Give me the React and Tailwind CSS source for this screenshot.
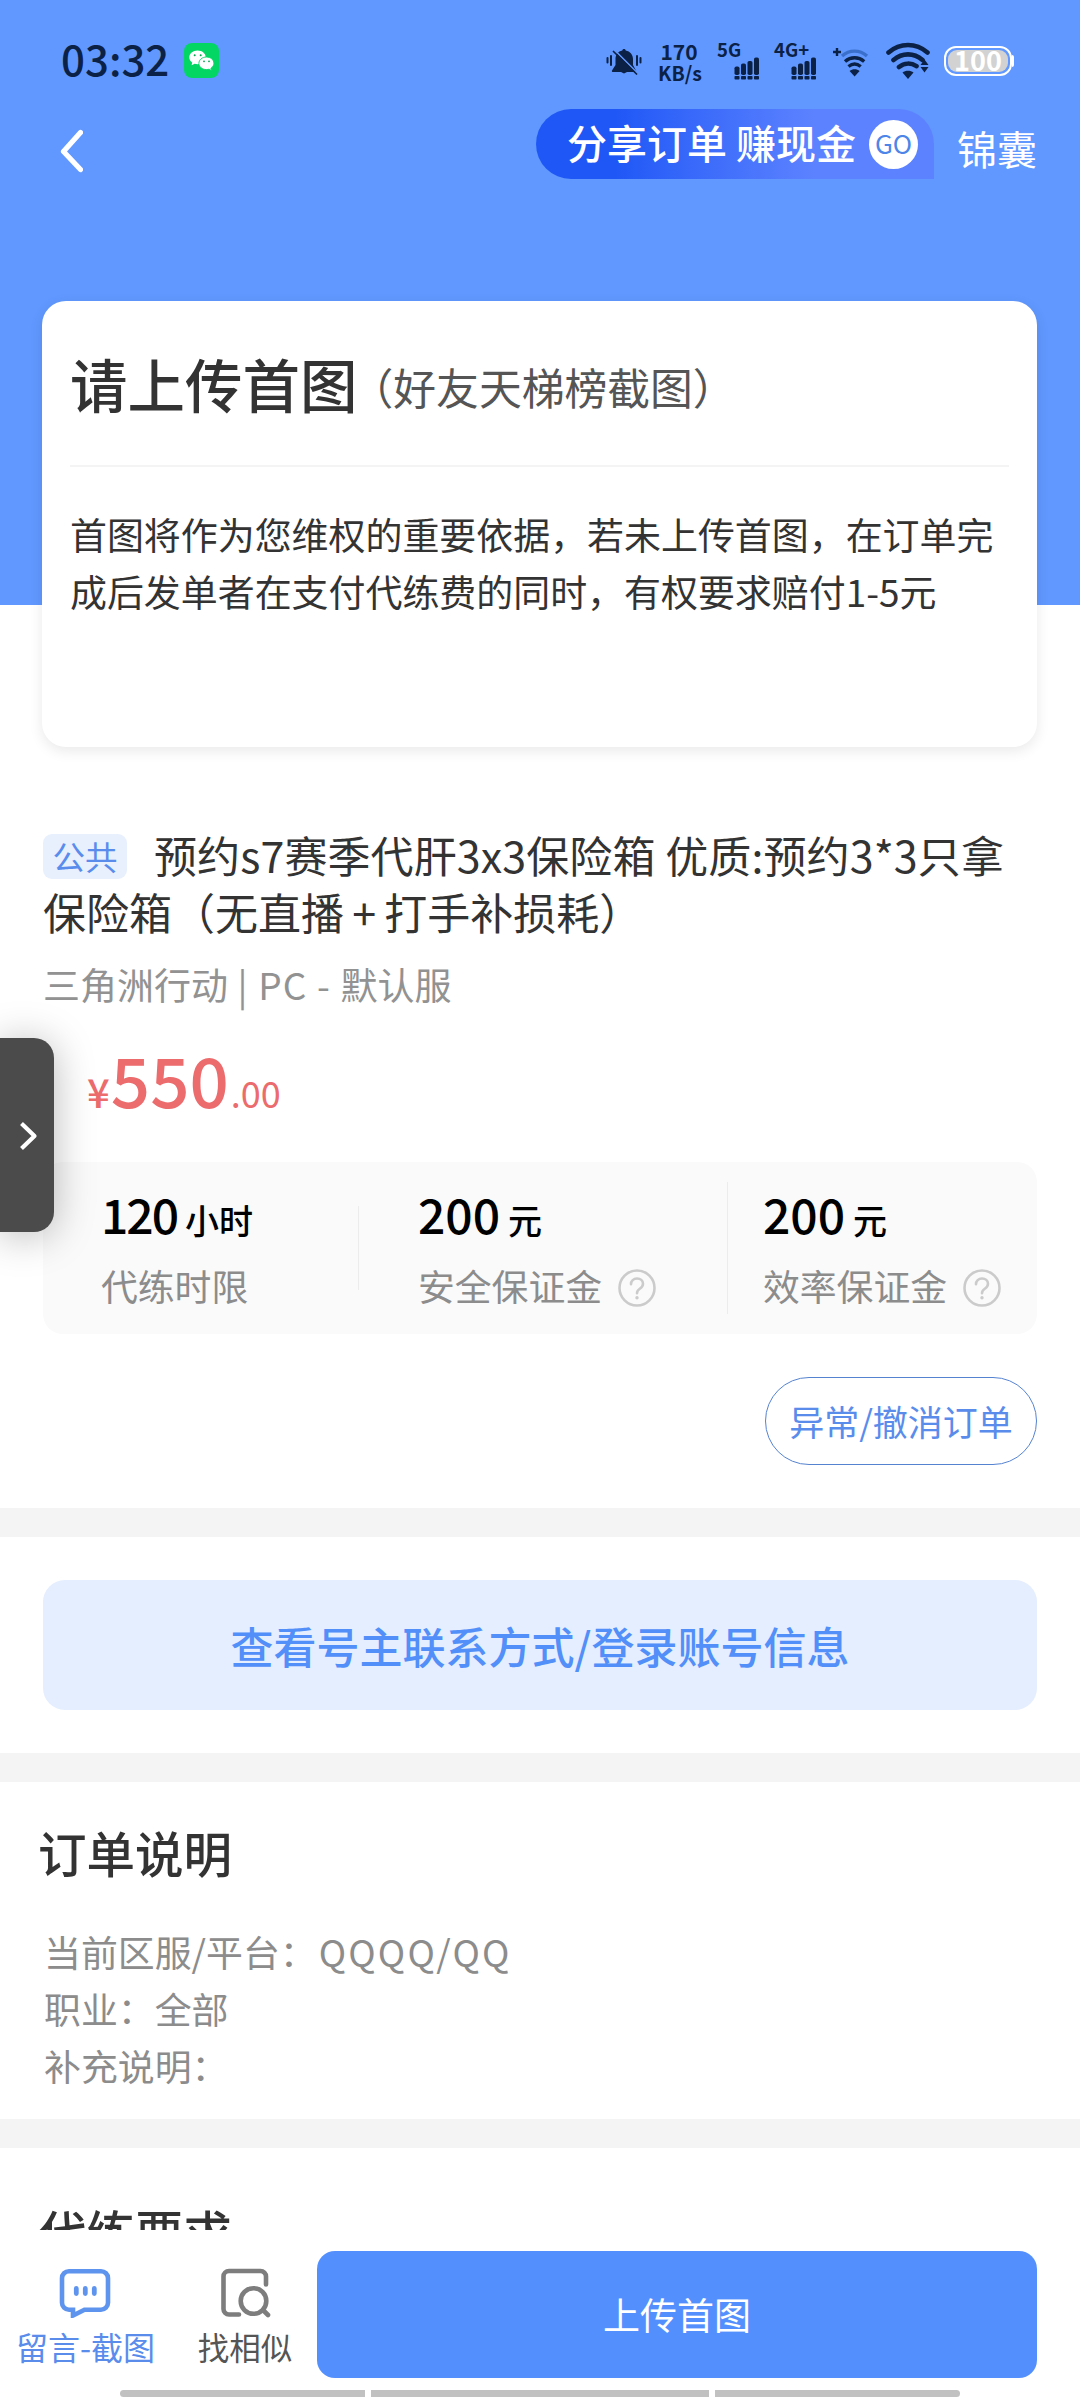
import React from 'react'
import clsx from 'clsx'

const stats = [
  { value: '120', unit: '小时', label: '代练时限', help: false, box: 'w-[315px] pl-[58px]', tracking: 'tracking-[-2px]' },
  { value: '200', unit: '元', label: '安全保证金', help: true, box: 'w-[368px] pl-[59px]', tracking: 'tracking-[0px]' },
  { value: '200', unit: '元', label: '效率保证金', help: true, box: 'flex-1 pl-[35px]', tracking: 'tracking-[0px]' },
]

const details = [
  { label: '当前区服/平台：', value: 'QQQQ/QQ' },
  { label: '职业：', value: '全部' },
  { label: '补充说明：', value: '' },
]

const WechatIcon = () => (
  <svg className="w-[35px] h-[35px]" viewBox="0 0 35 35">
    <rect width="35" height="35" rx="8" fill="#03d663" />
    <path d="M13.5 7.5c-4.6 0-8.2 3-8.2 6.8 0 2.1 1.1 4 2.9 5.3l-.6 2.7 3-1.5c.9.3 1.9.4 2.9.4 4.6 0 8.2-3 8.2-6.9s-3.6-6.8-8.2-6.8z" fill="#fff" />
    <path d="M22.4 14c-4.2 0-7.5 2.8-7.5 6.3s3.3 6.3 7.5 6.3c.9 0 1.7-.1 2.5-.3l2.5 1.3-.5-2.3c1.9-1.2 3-3 3-5 0-3.5-3.3-6.3-7.5-6.3z" fill="#fff" stroke="#03d663" strokeWidth="0.9" />
    <g fill="#03a64e">
      <circle cx="10.7" cy="12.3" r="1" />
      <circle cx="16.7" cy="12.3" r="1" />
      <circle cx="20" cy="18.3" r="0.9" />
      <circle cx="25" cy="18.3" r="0.9" />
    </g>
  </svg>
)

const MuteBell = () => (
  <svg className="w-[36px] h-[28px]" viewBox="0 0 36 28">
    <path d="M18 2c-1 0-1.5.6-1.7 1.4C12 4.3 9.5 7.6 9.5 12v6L6 23.5c-.4.8 0 1.500 1 1.500h8l3 1.500 3-1.500h8c1 0 1.400-.7 1-1.500L27 18v-6c0-4.400-2.800-7.700-7.300-8.600C19.5 2.6 19 2 18 2z" fill="#0c2146" />
    <path d="M8.5 3l24 24" stroke="#6098ff" strokeWidth="1.6" />
    <path d="M7.5 4.5l23 22.5" stroke="#0c2146" strokeWidth="1.7" strokeLinecap="round" />
    <path d="M1.5 11v4.500M5 9v9M31 9v9M34.5 11v4.500" stroke="#0c2146" strokeWidth="2" strokeLinecap="round" />
  </svg>
)

const SignalBars = () => (
  <svg className="w-[26px] h-[23px]" viewBox="0 0 26 23">
    <g fill="#0c2146">
      <rect x="0.5" y="9.5" width="5" height="8.5" rx="1.8" />
      <rect x="7" y="6.5" width="5" height="11.5" rx="1.8" />
      <rect x="13.5" y="4" width="5" height="14" rx="1.8" />
      <rect x="20" y="0.5" width="5" height="17.5" rx="1.8" />
      <rect x="0.5" y="19" width="5" height="3.5" rx="0.8" />
      <rect x="7" y="19" width="5" height="3.5" rx="0.8" />
      <rect x="13.5" y="19" width="5" height="3.5" rx="0.8" />
      <rect x="20" y="19" width="5" height="3.5" rx="0.8" />
    </g>
  </svg>
)

const HotspotIcon = () => (
  <svg className="w-[37px] h-[30px]" viewBox="0 0 37 30" fill="none">
    <path d="M5 0v8M1 4h8" stroke="#0c2146" strokeWidth="2.4" />
    <path d="M10 8c7.500-6.500 17.500-6.500 25 0" stroke="#3a6fcb" strokeWidth="3.4" />
    <path d="M13 13.5c5.800-5 13.400-5 19.200 0M16.500 18.500c3.800-3 8.400-3 12.200 0" stroke="#0c2146" strokeWidth="3.4" />
    <path d="M22.6 28.5l-5-5.500c2.700-2.500 7.300-2.500 10 0z" fill="#0c2146" />
  </svg>
)

const WifiIcon = () => (
  <svg className="w-[44px] h-[38px]" viewBox="0 0 44 38" fill="none">
    <path d="M2.5 10.5c11.500-10 27.500-10 39 0M7.500 18c8.800-7.500 20.200-7.500 29 0M13 25c5.200-4.200 12-4.400 17.500-.8" stroke="#0c2146" strokeWidth="4.6" strokeLinecap="round" />
    <path d="M22 37l-5.500-6.500c2.900-2.300 8.100-2.300 11 0z" fill="#0c2146" />
    <path d="M38.5 17.5l4 5.500h-8zM38.500 30.500l4-5.500h-8z" fill="#0c2146" />
  </svg>
)

const HelpIcon = () => (
  <svg className="w-[38px] h-[38px]" viewBox="0 0 38 38" fill="none" stroke="#cbcbcb" strokeWidth="2.6">
    <circle cx="19" cy="19" r="17.5" />
    <path d="M13 15.2c0-3.300 2.500-5.700 6-5.700s6 2.200 6 5.300c0 2.400-1.300 3.700-3.200 5-1.900 1.300-2.800 2.300-2.800 4.400" strokeLinecap="round" />
    <circle cx="19" cy="28.7" r="1.7" fill="#cbcbcb" stroke="none" />
  </svg>
)

const MessageIcon = () => (
  <svg className="w-[52px] h-[50px]" viewBox="0 0 52 50" fill="none">
    <path d="M10 3.2h32a7 7 0 0 1 7 7v24.5a7 7 0 0 1-7 7H25.5L14 47.5V41.7h-4a7 7 0 0 1-7-7v-24.5a7 7 0 0 1 7-7z" stroke="#5f94ee" strokeWidth="4.6" />
    <path d="M17.3 20.5v5M26.3 20.5v5M35.3 20.5v5" stroke="#5f94ee" strokeWidth="4.8" strokeLinecap="round" />
  </svg>
)

const SimilarIcon = () => (
  <svg className="w-[52px] h-[50px]" viewBox="0 0 52 50" fill="none" stroke="#7d7d7d" strokeWidth="4.6" strokeLinecap="round">
    <path d="M19 46.5H9a5.5 5.5 0 0 1-5.5-5.5V8.5A5.5 5.5 0 0 1 9 3h31.5A5.5 5.5 0 0 1 46 8.5V16.5" />
    <circle cx="33.5" cy="33" r="12.8" />
    <path d="M43.5 42.5l4.5 4.5" />
  </svg>
)

const StatusBar = () => (
  <div className="flex h-[122px] pl-[61px] text-[#0c2146]">
    <span className="mt-[34px] w-[123px] text-[42px] leading-[48px] font-medium">03:32</span>
    <div className="mt-[43px]"><WechatIcon /></div>
    <div className="mt-[47px] ml-[387px]"><MuteBell /></div>
    <div className="mt-[40px] ml-[16px] w-[42px] text-center font-bold">
      <div className="text-[21px] leading-[22px]">170</div>
      <div className="text-[19.5px] leading-[21px]">KB/s</div>
    </div>
    <div className="mt-[41px] ml-[17px] flex w-[42px] flex-col">
      <span className="text-[18.5px] leading-[16px] font-bold">5G</span>
      <div className="ml-[17px]"><SignalBars /></div>
    </div>
    <div className="mt-[41px] ml-[15px] flex w-[42px] flex-col">
      <span className="text-[18.5px] leading-[16px] font-bold whitespace-nowrap">4G+</span>
      <div className="ml-[17px]"><SignalBars /></div>
    </div>
    <div className="mt-[48px] ml-[16px]"><HotspotIcon /></div>
    <div className="mt-[42px] ml-[17px]"><WifiIcon /></div>
    <div className="mt-[46px] ml-[14px] flex h-[30px] items-center">
      <div className="h-[30px] w-[68px] rounded-[12px] border-[2px] border-white p-[2px]">
        <div className="flex h-full items-center justify-center rounded-[9px] bg-[#d2d2d2] pb-[3px] text-[27px] leading-none font-bold text-white">100</div>
      </div>
      <div className="h-[12px] w-[2px] rounded-r bg-white"></div>
    </div>
  </div>
)

const Divider = () => <div className="h-[29px] shrink-0 bg-[#f4f4f4]"></div>

const App = () => {
  return (
    <div className="relative flex h-[2400px] w-[1080px] flex-col overflow-hidden bg-white font-['Noto_Sans_CJK_SC',sans-serif] text-[#333]">
      <header className="h-[605px] shrink-0 bg-[#6098ff]">
        <StatusBar />
        <div className="-mt-[13px] flex h-[192px] items-start text-white">
          <svg className="mt-[20px] ml-[59px] h-[44px] w-[24px]" viewBox="0 0 24 44" fill="none">
            <path d="M21.5 3.5L4.5 22.5 21.5 40.5" stroke="#fff" strokeWidth="5.2" strokeLinecap="round" strokeLinejoin="round" />
          </svg>
          <div className="ml-[453px] flex h-[70px] w-[398px] items-center rounded-l-[35px] rounded-tr-[35px] bg-linear-to-r from-[#1f57f6] from-20% to-[#5c82ff] to-70% pl-[31px]">
            <span className="w-[302px] pb-[4px] text-[40px] leading-[66px] font-medium whitespace-nowrap">分享订单 赚现金</span>
            <span className="flex h-[49px] w-[49px] items-center justify-center rounded-full bg-white pb-[4px] text-[26px] text-[#4d86e8]">GO</span>
          </div>
          <span className="mt-[11px] ml-[23px] text-[40px] leading-[56px]">锦囊</span>
        </div>

        <div className="ml-[42px] h-[446px] w-[995px] rounded-[24px] bg-white px-[28px] shadow-[0_4px_14px_rgba(0,0,0,0.09)]">
          <div className="flex h-[166px] items-center border-b-2 border-[#f4f4f4]">
            <h1 className="text-[57.5px] leading-[80px] font-medium">请上传首图</h1>
            <span className="-ml-[7px] pt-[6px] text-[42.8px] leading-[60px] text-[#555]">（好友天梯榜截图）</span>
          </div>
          <p className="mt-[39px] w-[940px] text-[36.95px] leading-[57px]">
            首图将作为您维权的重要依据，若未上传首图，在订单完
            <br />
            成后发单者在支付代练费的同时，有权要求赔付1-5元
          </p>
        </div>
      </header>

      <section className="flex h-[903px] shrink-0 flex-col px-[43px] pt-[221px]">
        <h2 className="h-[114px] text-[43px] leading-[57px] whitespace-nowrap">
          <span className="flex h-[57px] items-center tracking-[0.1px]">
            <span className="mt-[3px] mr-[27px] flex h-[45px] w-[84px] items-center justify-center rounded-[9px] bg-[#e8f0fe] pb-[2px] text-[32.5px] tracking-normal text-[#5a8cec]">公共</span>
            <span>预约s7赛季代肝3x3保险箱 优质:预约3*3只拿</span>
          </span>
          <span className="block [word-spacing:-1.5px]">保险箱（无直播 + 打手补损耗）</span>
        </h2>
        <div className="mt-[17px] text-[37px] leading-[54px] whitespace-pre text-[#929292]">
          三角洲行动<span className="tracking-[1.2px]"> | PC - </span>默认服
        </div>
        <div className="mt-[17px] flex h-[100px] items-baseline pl-[44px] leading-[100px] text-[#ec6b6d]">
          <span className="text-[40px] font-medium">¥</span>
          <span className="ml-px text-[69px] font-medium">550</span>
          <span className="ml-[2px] text-[36px]">.00</span>
        </div>
        <div className="mt-[34px] flex h-[172px] w-[994px] items-center rounded-[20px] bg-[#fafafa]">
          {stats.map((item, index) => (
            <React.Fragment key={item.label}>
              {index > 0 && (
                <div className={clsx('w-px bg-[#ececec]', index === 1 ? 'h-[84px]' : 'h-[132px]')}></div>
              )}
              <div className={item.box}>
                <div className="flex items-baseline pt-[2px] leading-[60px] font-medium text-black">
                  <span className={clsx('text-[48px]', item.tracking)}>{item.value}</span>
                  <span className="ml-[8px] text-[34px]">{item.unit}</span>
                </div>
                <div className="mt-[6px] flex h-[60px] items-center text-[36.8px] text-[#8c8c8c]">
                  <span>{item.label}</span>
                  {item.help && <div className="ml-[16px] pt-[4px]"><HelpIcon /></div>}
                </div>
              </div>
            </React.Fragment>
          ))}
        </div>
        <button className="mt-[43px] h-[88px] w-[272px] self-end rounded-full border border-[#5583d0] text-[35px] text-[#5a8cec]">异常/撤消订单</button>
      </section>

      <Divider />

      <section className="h-[216px] shrink-0 px-[43px] pt-[43px]">
        <button className="h-[130px] w-[994px] rounded-[22px] bg-[#e4eefe] text-[43px] font-medium text-[#528ff8]">查看号主联系方式/登录账号信息</button>
      </section>

      <Divider />

      <section className="h-[337px] shrink-0 pt-[35px]">
        <h3 className="pl-[38px] text-[48.5px] leading-[70px] font-medium">订单说明</h3>
        <div className="mt-[36px] pl-[44px] text-[36.9px] leading-[57px] text-[#8c8c8c]">
          {details.map((line) => (
            <p key={line.label}>
              {line.label}
              <span className={clsx(line.value.startsWith('Q') && 'ml-[2px] tracking-[2.2px]')}>{line.value}</span>
            </p>
          ))}
        </div>
      </section>

      <Divider />

      <section className="h-[82px] shrink-0 overflow-hidden pt-[48px]">
        <h3 className="pl-[38px] text-[48.5px] leading-[70px] font-medium">代练要求</h3>
      </section>

      <footer className="flex h-[170px] shrink-0 flex-col bg-white pt-[21px]">
        <div className="flex h-[127px]">
          <div className="flex w-[171px] flex-col items-center pt-[17px] text-[#5a8cec]">
            <div className="-ml-[2px]"><MessageIcon /></div>
            <span className="mt-[4px] text-[32px] leading-[48px]">留言-截图</span>
          </div>
          <div className="flex w-[146px] flex-col items-center pl-[2px] pt-[17px] text-[#555]">
            <div className="ml-[2px]"><SimilarIcon /></div>
            <span className="mt-[4px] text-[31.5px] leading-[48px]">找相似</span>
          </div>
          <button className="h-[127px] w-[720px] rounded-[18px] bg-[#5490fd] text-[37px] text-white">上传首图</button>
        </div>
        <div className="mt-[12px] flex justify-center gap-[6px]">
          <div className="h-[7px] w-[245px] rounded-l-full bg-[#c1c1c1]"></div>
          <div className="h-[7px] w-[338px] bg-[#c1c1c1]"></div>
          <div className="h-[7px] w-[245px] rounded-r-full bg-[#c1c1c1]"></div>
        </div>
      </footer>

      {/* Floating drawer handle */}
      <div className="absolute top-[1038px] left-0 flex h-[194px] w-[54px] items-center rounded-r-[20px] bg-[#4b4b4b] pl-[19px] pt-[2px] shadow-[0_4px_40px_rgba(0,0,0,0.28)]">
        <svg className="h-[32px] w-[20px]" viewBox="0 0 20 32" fill="none">
          <path d="M2.5 3.5L15.5 16 2.5 28.5" stroke="#fff" strokeWidth="4.2" strokeLinejoin="round" />
        </svg>
      </div>
    </div>
  )
}

export default App
